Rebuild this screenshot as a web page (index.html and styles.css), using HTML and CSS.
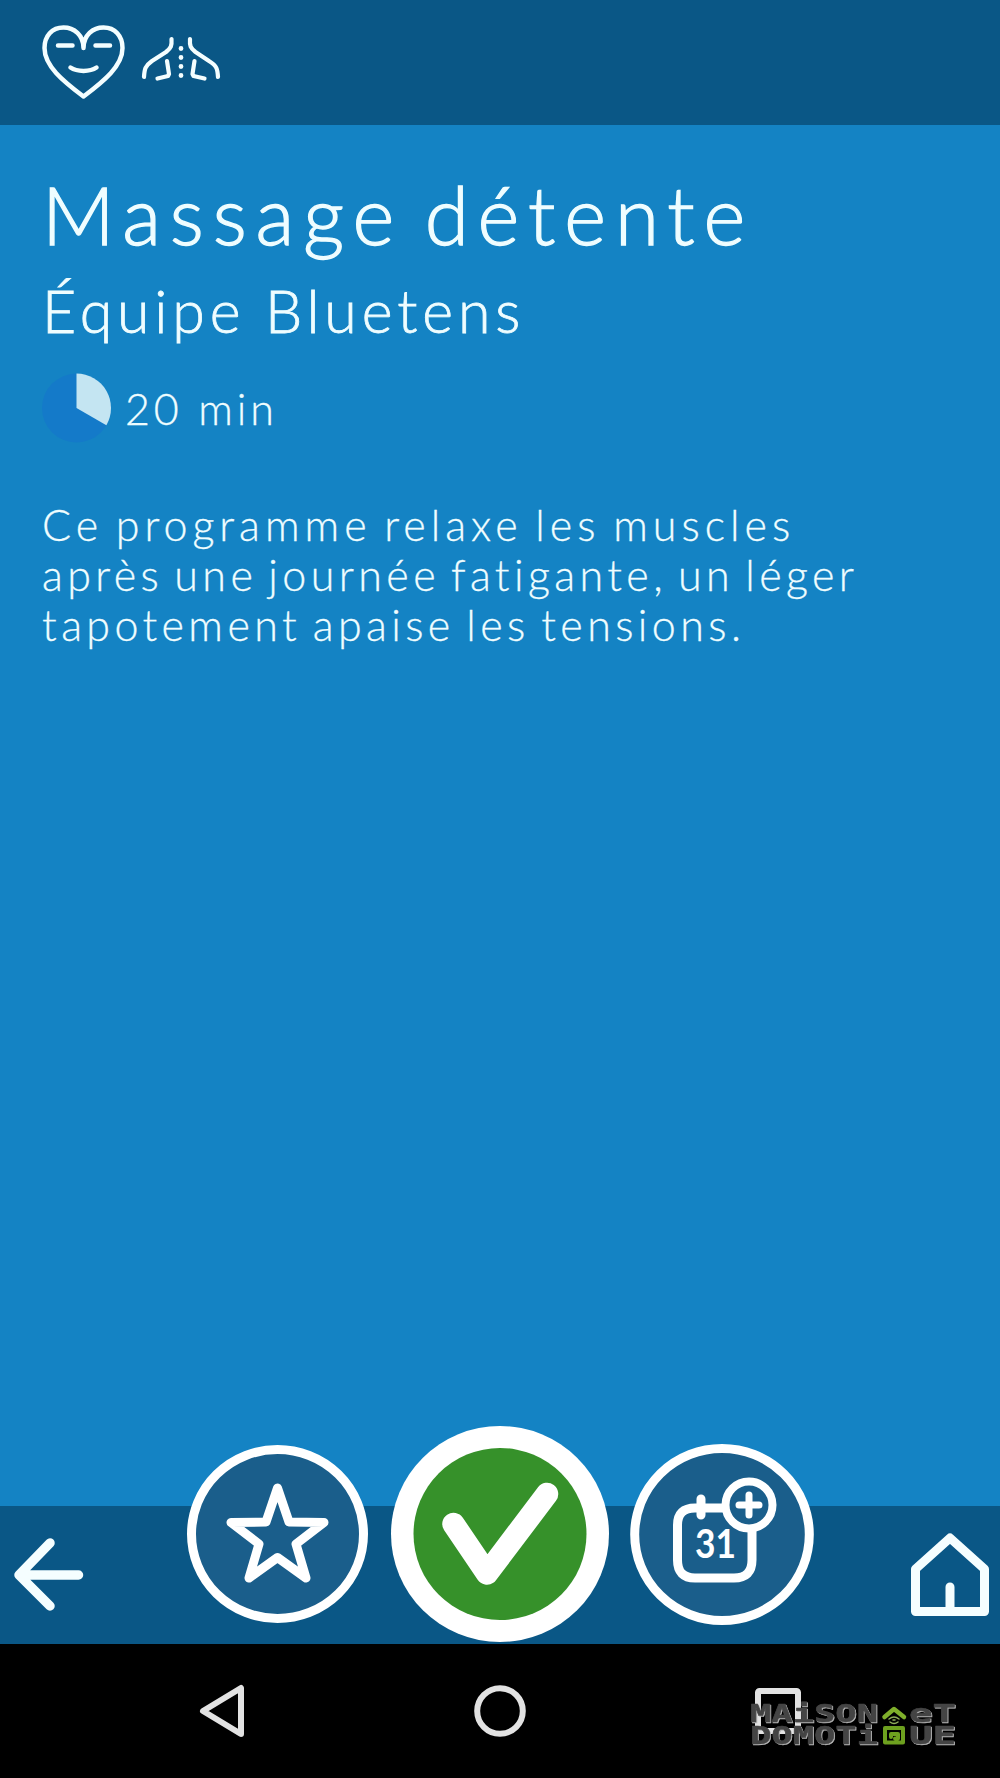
FILE: index.html
```
<!DOCTYPE html>
<html lang="fr">

<head>
  <meta charset="UTF-8" />
  <meta name="viewport" content="width=device-width, initial-scale=1.0" />
  <title>Massage détente</title>
  <link rel="stylesheet" href="styles.css">
</head>

<body>
  <header class="top-bar">
    <svg class="icon-heart" viewBox="0 0 84 76" aria-hidden="true">
      <path d="M42.500 24 C42.500 11 33 3.500 22.500 3.500 C11 3.500 3.500 12 3.500 24 C3.500 42 22 57 42.500 72.500 C63 57 81.500 42 81.500 24 C81.500 12 74 3.500 62.500 3.500 C52 3.500 42.500 11 42.500 24 Z" />
      <path d="M17 21.500 H31.500 M54.500 21.500 H69 M29.500 43.500 C36 48 49 48 55.500 43.500" />
    </svg>
    <svg class="icon-back" viewBox="0 0 80 44" aria-hidden="true">
      <path d="M30.500 3 C31 10 30 12 25 16 L11 25 C4 30 3.500 33 3 41" />
      <path d="M49 3 C48.500 10 49.500 12 54.500 16 L68 25 C76 30 76.500 33 77 41" />
      <path d="M26 25 L28 38 L27 40 L16.500 42.500" />
      <path d="M53.500 25 L51.500 38 L52.500 40 L63.500 42.500" />
      <path class="spine" d="M40 12.500 V12.510 M40 21.500 V21.510 M40 30.500 V30.510 M40 39.500 V39.510" />
    </svg>
  </header>

  <main class="program">
    <h1>Massage détente</h1>
    <h2>Équipe Bluetens</h2>
    <div class="duration">
      <svg class="pie" viewBox="0 0 70 70" aria-hidden="true">
        <circle cx="35" cy="35" r="35" fill="#147ac9" />
        <path d="M35 35 V0 A35 35 0 0 1 65.300 52.500 Z" fill="#c4e5f2" />
      </svg>
      <span>20 min</span>
    </div>
    <p class="description">
      <span class="line-1">Ce programme relaxe les muscles</span>
      <span class="line-2">après une journée fatigante, un léger</span>
      <span class="line-3">tapotement apaise les tensions.</span>
    </p>
  </main>

  <footer class="action-bar">
    <svg class="icon-arrow" viewBox="0 0 70 74" aria-hidden="true">
      <path d="M36 5 L5 37 L36 68 M8 37 H64.500" />
    </svg>

    <div class="actions">
      <svg class="btn-star" viewBox="0 0 181 178" aria-hidden="true">
        <ellipse class="ring" cx="90.500" cy="89" rx="86" ry="84.500" />
        <path class="star" d="M90.500 43 L102 77 L137 77.500 L109 99 L119 133 L90.500 112.500 L62 133 L72 99 L44 77.500 L79 77 Z" />
      </svg>
      <svg class="btn-check" viewBox="0 0 218 216" aria-hidden="true">
        <ellipse cx="109" cy="108" rx="109" ry="108" fill="#fff" />
        <ellipse cx="109" cy="108" rx="86.500" ry="86" fill="#36912a" />
        <path class="check" d="M62.500 98 L96 147.500 L156 68" />
      </svg>
      <svg class="btn-calendar" viewBox="0 0 184 181" aria-hidden="true">
        <ellipse class="ring" cx="92" cy="90.500" rx="87.300" ry="86" />
        <path class="calendar" d="M96 64 H65 Q47.500 64 47.500 81 V116 Q47.500 134 65 134 H104 Q122 134 122 116 V86 M71 55 V71" />
        <text x="65" y="113.500" textLength="41" lengthAdjust="spacingAndGlyphs">31</text>
        <circle class="badge" cx="119" cy="61" r="23.500" />
        <path class="plus" d="M119 51 V71 M109 61 H129" />
      </svg>
    </div>

    <svg class="icon-home" viewBox="0 0 78 85" aria-hidden="true">
      <path d="M4.500 36 L39 5 L73.500 36 V78.500 H4.500 Z M39 77 V54" />
    </svg>
  </footer>

  <nav class="system-nav">
    <svg class="nav-back" viewBox="0 0 44 52" aria-hidden="true">
      <path d="M41 3 V49 L3 26 Z" />
    </svg>
    <svg class="nav-home" viewBox="0 0 52 52" aria-hidden="true">
      <circle cx="26" cy="26" r="22.800" />
    </svg>
    <svg class="nav-recent" viewBox="0 0 46 46" aria-hidden="true">
      <rect x="3" y="3" width="40" height="40" rx="1.500" />
    </svg>

    <!-- site watermark, sits over the recent apps button -->
    <svg class="watermark" viewBox="0 0 210 44" aria-hidden="true">
      <g class="word">
        <text x="1" y="19.500" textLength="128" lengthAdjust="spacingAndGlyphs">MAiSON</text>
        <text x="160" y="19.500" textLength="47" lengthAdjust="spacingAndGlyphs">eT</text>
        <text x="1" y="41.500" textLength="128" lengthAdjust="spacingAndGlyphs">DOMOTi</text>
        <text x="160" y="41.500" textLength="47" lengthAdjust="spacingAndGlyphs">UE</text>
      </g>
      <path class="roof" d="M135.500 15 L145 7 L155 15" />
      <path class="waves" d="M140 17 Q145 13 150 17 M141 20 Q145 23 149 20 M144 18 H146" />
      <path class="house" d="M136 26 H154 V40.500 H136 Z M142 35 V32 H149 V36.500 H146" />
    </svg>
  </nav>
</body>

</html>
```
FILE: styles.css
```
* {
  box-sizing: border-box;
}

body {
  margin: 0;
  height: 1778px;
  display: flex;
  flex-direction: column;
  overflow: hidden;
  background-color: #1483c4;
  color: #effdff;
  font-family: Lato, "Liberation Sans", sans-serif;
  font-weight: 300;
}

svg {
  display: block;
  flex: none;
  overflow: visible;
  fill: none;
  stroke-linecap: round;
  stroke-linejoin: round;
}

.top-bar {
  height: 125px;
  display: flex;
  padding: 24px 41px;
  background-color: #0a5786;
}

.icon-heart {
  width: 84px;
  height: 76px;
  stroke: #f4feff;
  stroke-width: 4.5;
}

.icon-back {
  width: 80px;
  height: 44px;
  margin: 12px 0 0 16px;
  stroke: #f4feff;
  stroke-width: 4.2;
}

.icon-back .spine {
  stroke-width: 4.8;
}

.program {
  flex: 1;
  padding: 41px 42px 0;
}

h1,
h2,
.description {
  margin: 0;
  font-weight: 300;
  white-space: nowrap;
}

h1 {
  height: 99px;
  font-size: 80px;
  line-height: 96px;
  letter-spacing: 8.9px;
  word-spacing: -9px;
  -webkit-text-stroke: 1.3px;
}

h2 {
  height: 96px;
  font-size: 59px;
  line-height: 92px;
  letter-spacing: 4.9px;
  word-spacing: -1.5px;
  -webkit-text-stroke: 0.8px;
}

.duration {
  height: 94px;
  display: flex;
  align-items: center;
  gap: 14px;
  font-size: 43px;
  letter-spacing: 3.9px;
  -webkit-text-stroke: 0.3px;
}

.pie {
  width: 69px;
  height: 70px;
}

.description {
  margin-top: 45px;
  font-size: 43px;
  line-height: 50px;
  -webkit-text-stroke: 0.3px;
}

.description span {
  display: block;
}

.line-1 {
  letter-spacing: 5px;
  word-spacing: -4px;
}

.line-2 {
  letter-spacing: 4.4px;
  word-spacing: -5px;
}

.line-3 {
  letter-spacing: 4.4px;
  word-spacing: -4.5px;
}

.action-bar {
  height: 138px;
  display: flex;
  align-items: center;
  justify-content: space-between;
  padding: 0 11px 0 14px;
  background-color: #0a5786;
}

.icon-arrow {
  width: 70px;
  height: 74px;
  stroke: #f5feff;
  stroke-width: 9.5;
}

.icon-home {
  width: 78px;
  height: 85px;
  stroke: #f5feff;
  stroke-width: 9;
}

/* the round buttons stick out above the bar */
.actions {
  display: flex;
  align-items: center;
  margin: -82px 0 0 6px;
}

.btn-star {
  width: 181px;
  height: 178px;
}

.btn-check {
  width: 218px;
  height: 216px;
  margin: 0 21px 0 23px;
}

.btn-calendar {
  width: 184px;
  height: 181px;
}

.ring {
  fill: #1a5e8b;
  stroke: #fff;
  stroke-width: 9;
}

.star,
.calendar {
  stroke: #fff;
  stroke-width: 9;
}

.check {
  stroke: #fff;
  stroke-width: 22.5;
}

.plus {
  stroke: #fff;
  stroke-width: 7;
}

.badge {
  fill: #1a5e8b;
  stroke: #fff;
  stroke-width: 8;
}

.btn-calendar text {
  fill: #fff;
  font-size: 41px;
  font-weight: 700;
}

.system-nav {
  position: relative;
  height: 134px;
  display: flex;
  padding-left: 200px;
  background-color: #000;
  stroke: #e2e2e2;
  stroke-width: 6;
}

.nav-back {
  width: 44px;
  height: 52px;
  margin-top: 41px;
}

.nav-home {
  width: 52px;
  height: 52px;
  margin: 41px 0 0 230px;
}

.nav-recent {
  width: 46px;
  height: 46px;
  margin: 44px 0 0 229px;
}

.watermark {
  position: absolute;
  left: 749px;
  top: 58px;
  width: 210px;
  height: 44px;
}

.word {
  fill: #444;
  stroke: #444;
  stroke-width: 0.5;
  font-family: "DejaVu Sans Mono", monospace;
  font-size: 24px;
  font-weight: 700;
  filter: drop-shadow(1px 1px 0 #b5b5b5);
}

.roof {
  stroke: #7faf2b;
  stroke-width: 4.5;
}

.waves {
  stroke: #8fae5a;
  stroke-width: 1.5;
}

.house {
  stroke: #6da01f;
  stroke-width: 4;
}
```
